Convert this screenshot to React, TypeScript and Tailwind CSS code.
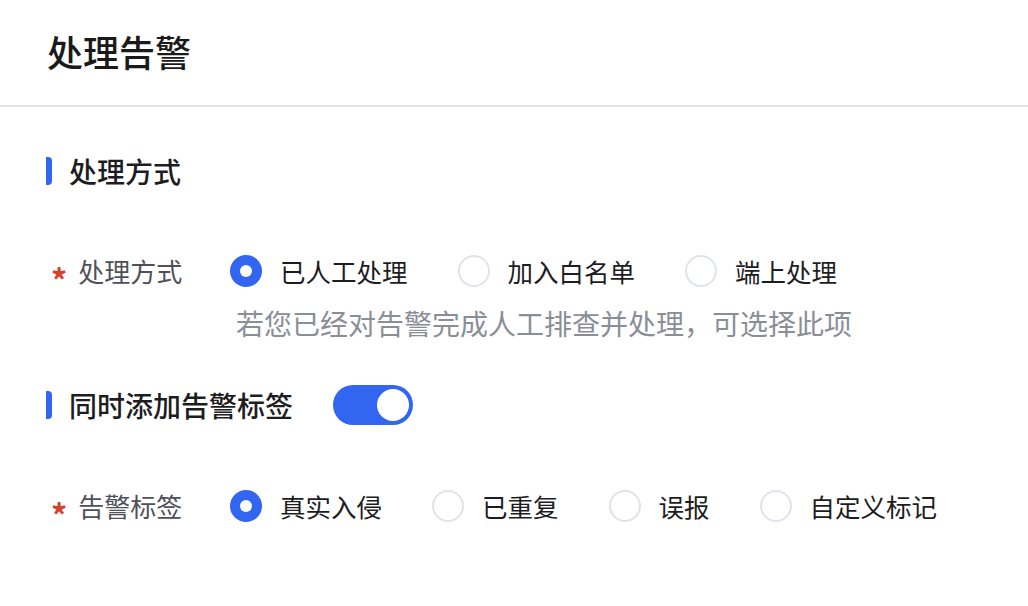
import React from "react";

const font = { fontFamily: '"Noto Sans CJK SC", "Noto Sans", sans-serif' };

function Radio({ checked, label }: { checked?: boolean; label: string }) {
  return (
    <label className="flex items-center gap-[18px] mr-[50px]">
      {checked ? (
        <span className="w-[32px] h-[32px] rounded-full bg-[#3265f0] flex items-center justify-center">
          <span className="w-[12px] h-[12px] rounded-full bg-white" />
        </span>
      ) : (
        <span className="w-[32px] h-[32px] rounded-full border-2 border-[#e0e3e9] bg-white" />
      )}
      <span className="text-[25.5px] text-[#1d1d1f] leading-none">{label}</span>
    </label>
  );
}

function SectionTitle({ children }: { children: React.ReactNode }) {
  return (
    <div className="flex items-center">
      <span className="w-[6px] h-[28px] rounded-r-[4px] bg-[#3265f0]" />
      <span className="ml-[17px] text-[28px] font-medium text-[#1d1d1f] leading-none">{children}</span>
    </div>
  );
}

function FieldLabel({ children }: { children: React.ReactNode }) {
  return (
    <div className="flex items-center w-[230px] pl-[51px] shrink-0">
      <span className="h-[26px] text-[32px] font-semibold text-[#d4412f] leading-none translate-y-[5px] mr-[11px]">*</span>
      <span className="text-[26px] text-[#4f5159] leading-none">{children}</span>
    </div>
  );
}

export default function App() {
  return (
    <div className="w-[1028px] h-[606px] bg-white overflow-hidden" style={font}>
      <div className="h-[107px] flex items-center pl-[47px] pb-[4px] border-b-2 border-[#e4e4e8]">
        <h1 className="text-[36px] font-medium text-[#1a1a1a] leading-none">处理告警</h1>
      </div>
      <div className="pl-[46px] pt-[50px]">
        <SectionTitle>处理方式</SectionTitle>
      </div>
      <div className="flex items-center mt-[70px]">
        <FieldLabel>处理方式</FieldLabel>
        <div className="flex items-center">
          <Radio checked label="已人工处理" />
          <Radio label="加入白名单" />
          <Radio label="端上处理" />
        </div>
      </div>
      <div className="pl-[236px] mt-[22px] text-[28px] text-[#8a8e97] leading-none">
        若您已经对告警完成人工排查并处理，可选择此项
      </div>
      <div className="pl-[46px] mt-[48px] flex items-center">
        <SectionTitle>同时添加告警标签</SectionTitle>
        <span className="ml-[40px] w-[80px] h-[40px] rounded-full bg-[#3265f0] flex items-center justify-end pr-[4px]">
          <span className="w-[32px] h-[32px] rounded-full bg-white" />
        </span>
      </div>
      <div className="flex items-center mt-[65px]">
        <FieldLabel>告警标签</FieldLabel>
        <div className="flex items-center">
          <Radio checked label="真实入侵" />
          <Radio label="已重复" />
          <Radio label="误报" />
          <Radio label="自定义标记" />
        </div>
      </div>
    </div>
  );
}
